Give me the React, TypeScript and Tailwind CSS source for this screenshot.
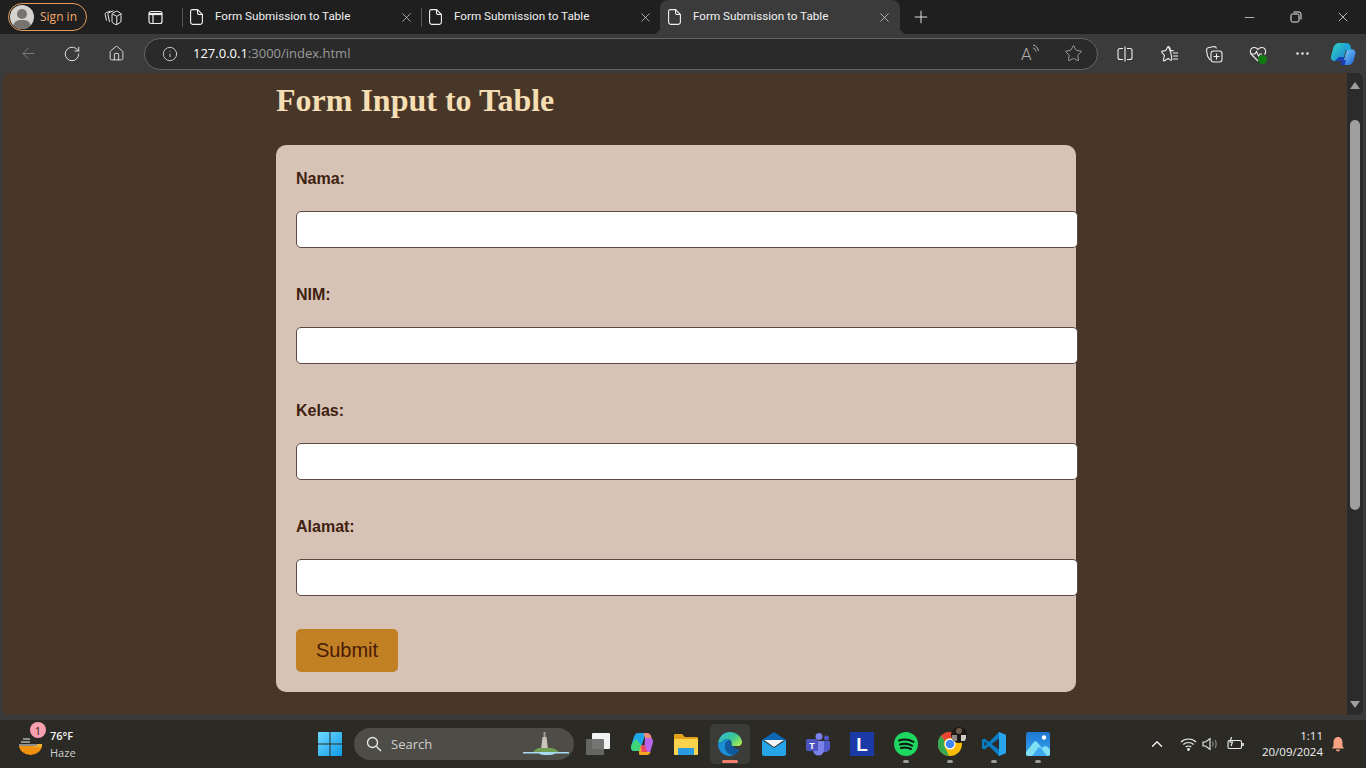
import React from "react";
import { ArrowLeft, ChevronUp, Ellipsis, Home, Info, Minus, Plus, RotateCw, Star, X } from "lucide-react";

const uiFont = "font-['Open_Sans','Noto_Sans',sans-serif]";

const PageIcon = () => (
  <svg width="13" height="16" viewBox="0 0 13 16" fill="none" stroke="#f2f2f2" strokeWidth="1.100" className="shrink-0">
    <path d="M2.500.6h5L12.400 5.500V13a2.400 2.400 0 0 1-2.400 2.400H3A2.400 2.400 0 0 1 .6 13V2.500A1.900 1.900 0 0 1 2.500.6z" />
    <path d="M7.500.6v3.200a1.700 1.700 0 0 0 1.700 1.700h3.200" />
  </svg>
);

const Tab = ({ active }: { active?: boolean }) => (
  <div className={`relative flex h-[34px] items-center ${active ? "w-[240px] rounded-t-lg bg-[#3b3b3b] pl-2" : "w-[238px] pl-[7px]"}`}>
    <PageIcon />
    <span className="ml-3 font-['Roboto',sans-serif] text-[11.700px] text-[#f0f0f0]">Form Submission to Table</span>
    <X size={15} strokeWidth={1.100} className={`absolute top-[10px] text-[#e4e4e4] ${active ? "right-[8px]" : "right-[7px]"}`} />
    {active && (
      <>
        <span className="absolute bottom-0 left-[-7px] h-[7px] w-[7px] bg-[radial-gradient(circle_at_0_0,#1f1f1f_7px,#3b3b3b_7px)]" />
        <span className="absolute bottom-0 right-[-7px] h-[7px] w-[7px] bg-[radial-gradient(circle_at_100%_0,#1f1f1f_7px,#3b3b3b_7px)]" />
      </>
    )}
  </div>
);

const TitleBar = () => (
  <div className="flex h-[34px] items-center bg-[#1f1f1f]">
    <div className="ml-2 flex h-[28px] w-[79px] items-center rounded-full border border-[#e69b5e]">
      <span className="relative ml-px h-6 w-6 overflow-hidden rounded-full bg-[#d5d3d0]">
        <span className="absolute left-[7px] top-1 h-[10px] w-[10px] rounded-full bg-[#77736f]" />
        <span className="absolute left-[3px] top-[15px] h-[14px] w-[18px] rounded-full bg-[#77736f]" />
      </span>
      <span className={`ml-[6px] text-[12px] text-[#efa769] ${uiFont}`}>Sign in</span>
    </div>
    <svg width="18" height="18" viewBox="0 0 18 18" fill="none" stroke="#e8e8e8" strokeWidth="1" className="ml-[17px]">
      <path d="M2.500 12.500 1.200 6.500c-.2-.8.2-1.500 1-1.800L6.500 3" />
      <path d="M5.500 14 4 6.500c-.2-.9.200-1.500 1-1.800l4.500-2" />
      <path d="M8 6.500c0-.8.400-1.300 1-1.600l3-1.500c.6-.3 1.200-.3 1.700 0l2.300 1.400c.6.400 1 1 1 1.700v6.500c0 .8-.4 1.300-1 1.600l-3 1.800c-.6.300-1.200.3-1.800 0L9 15c-.6-.4-1-1-1-1.700z" />
      <path d="m8.300 6 4.500 2.300L17.500 5.500M12.800 8.300v8.400" />
    </svg>
    <svg width="15" height="15" viewBox="0 0 15 15" fill="none" stroke="#f0f0f0" strokeWidth="1.200" className="ml-[26px]">
      <rect x="1" y="1.500" width="13" height="12" rx="2" />
      <path d="M1 4h13" strokeWidth="2.200" />
      <path d="M5 4v9.500" />
    </svg>
    <div className="ml-[19px] h-[19px] w-px bg-[#555]" />
    <Tab />
    <div className="h-[19px] w-px bg-[#555]" />
    <Tab />
    <Tab active />
    <Plus size={20} strokeWidth={1.100} className="ml-[11px] text-[#f0f0f0]" />
    <div className="ml-auto flex items-center">
      <Minus size={15} strokeWidth={1.100} className="text-[#eee]" />
      <svg width="12" height="12" viewBox="0 0 12 12" fill="none" stroke="#eee" strokeWidth="1" className="ml-[33px]">
        <rect x="1" y="3" width="8" height="8" rx="1.500" />
        <path d="M3.500 1h5.500a2 2 0 0 1 2 2v5.500" />
      </svg>
      <X size={16} strokeWidth={1.100} className="ml-[33px] mr-[15px] text-[#eee]" />
    </div>
  </div>
);

const Copilot = ({ size = 26 }: { size?: number }) => (
  <svg width={size} height={size} viewBox="0 0 26 26">
    <defs>
      <linearGradient id="cpa" x1="0" y1="0" x2="1" y2="1">
        <stop offset="0" stopColor="#2fd6c0" />
        <stop offset="1" stopColor="#1a7fd6" />
      </linearGradient>
      <linearGradient id="cpb" x1="0" y1="0" x2="1" y2="1">
        <stop offset="0" stopColor="#7ad0f7" />
        <stop offset="1" stopColor="#1d5fd9" />
      </linearGradient>
    </defs>
    <path d="M9 2h6.500c1.500 0 2 1 1.600 2.300L13 20H5c-3 0-4.500-2-4-4.500L3 8c.8-3.500 3-6 6-6z" fill="url(#cpa)" />
    <path d="M13 24h5c3 0 5-2 5.800-5l1.600-6c.6-2.500-.9-4.500-3.400-4.500H17l-4 13.500c-.2 1 0 2 0 2z" fill="url(#cpb)" />
    <path d="M14 2h2.500c2 0 3.500 1.500 4 3.300L21.500 9H16z" fill="#1ea6d8" />
    <path d="M5 20h8l1.500-4H9z" fill="#1c3fb8" />
    <path d="M11 24h4l1-5h-4z" fill="#1c3fb8" />
  </svg>
);

const ToolBar = () => (
  <div className="flex h-[39px] items-center bg-[#3b3b3b]">
    <ArrowLeft size={19} strokeWidth={1} className="ml-[19px] text-[#8b8b8b]" />
    <RotateCw size={18} strokeWidth={1.200} className="ml-[25px] text-[#efefef]" />
    <Home size={17} strokeWidth={1.200} className="ml-[27px] text-[#efefef]" />
    <div className="ml-[19px] flex h-[32px] w-[954px] items-center rounded-full border border-[#636363] bg-[#2a2a2a]">
      <Info size={16} strokeWidth={1.200} className="ml-[17px] text-[#e8e8e8]" />
      <span className={`ml-[15px] text-[13px] text-white ${uiFont}`}>
        127.0.0.1<span className="text-[#9a9a9a]">:3000/index.html</span>
      </span>
      <div className="ml-auto flex items-center">
        <span className="relative mr-[26px] h-4 w-[17px]">
          <span className="absolute left-0 top-[-4px] font-['Roboto',sans-serif] text-[17px] font-light leading-[24px] text-[#b0b0b0]">A</span>
          <svg width="8" height="9" viewBox="0 0 8 9" fill="none" stroke="#b0b0b0" strokeWidth="1" className="absolute right-[-2px] top-[-2px]">
            <path d="M1 1c3 .5 5 3 5.500 6M1 4c1.500.3 2.500 1.500 3 3.500" />
          </svg>
        </span>
        <Star size={19} strokeWidth={1.100} className="mr-[14px] text-[#a8a8a8]" />
      </div>
    </div>
    <svg width="16" height="16" viewBox="0 0 16 16" fill="none" stroke="#efefef" strokeWidth="1.100" className="ml-[19px]">
      <path d="M6 2.500H3a2 2 0 0 0-2 2v7a2 2 0 0 0 2 2h3M10 2.500h3a2 2 0 0 1 2 2v7a2 2 0 0 1-2 2h-3M8 .5v15" />
    </svg>
    <svg width="18" height="18" viewBox="0 0 18 18" fill="none" stroke="#efefef" strokeWidth="1.100" className="ml-[28px]">
      <path d="M7.500 1.500c.4 0 .7.300.9.700l1.300 3.200 3 .3M10 8.500l.8 5.800c.1.800-.6 1.200-1.200.8L7.200 13.500l-3.700 2.300c-.6.300-1.200-.1-1.100-.8l1-4.500L1 7.500c-.5-.5-.3-1.300.4-1.400l3.500-.5 1.600-3.400c.2-.4.600-.7 1-.7z" />
      <path d="M12 8h5M12 11h5M12 14h5" />
    </svg>
    <svg width="18" height="18" viewBox="0 0 18 18" fill="none" stroke="#efefef" strokeWidth="1.100" className="ml-[26px]">
      <path d="M5 15 2.500 11 1.500 5c0-1 .5-2 1.500-2.300L9 1.500c1.500 0 2.300.5 2.500 2" />
      <rect x="6" y="6" width="11" height="11" rx="2.500" />
      <path d="M11.500 8.500v6M8.500 11.500h6" />
    </svg>
    <span className="relative ml-[26px] h-[18px] w-[18px]">
      <svg width="18" height="18" viewBox="0 0 18 18" fill="none" stroke="#efefef" strokeWidth="1.100">
        <path d="M9 16 2.500 9.500C.5 7.500 1 3 4.500 2.500 6.500 2.200 8 3 9 4.500c1-1.500 2.500-2.300 4.500-2 3.500.5 4 5 2 7" />
        <path d="M1.500 9H6l1.500-2.500L9.500 11l1.500-2h2" />
      </svg>
      <span className="absolute bottom-[-1px] right-0 h-[9px] w-[9px] rounded-full bg-[#107c10]" />
    </span>
    <Ellipsis size={17} strokeWidth={1.600} className="ml-[27px] text-[#efefef]" />
    <span className="ml-[19px]">
      <Copilot />
    </span>
  </div>
);

const Field = ({ label }: { label: string }) => (
  <div className="pb-[33px]">
    <label className="mb-[23px] block pt-[5px] text-[16px] font-bold leading-[18px] text-[#3e2110]">{label}</label>
    <input type="text" className="block h-[37px] w-[782px] rounded-[5px] border border-[#5b4a43] bg-white" />
  </div>
);

const Page = () => (
  <div className="flex-1 overflow-hidden rounded-tl-md bg-[#483629] font-['Liberation_Sans',Arial,sans-serif]">
    <div className="ml-[273px] w-[800px] pt-[9px]">
      <h1 className="mb-[27px] font-['Liberation_Serif',serif] text-[32px] font-bold leading-[36px] text-[#f5deb3]">
        Form Input to Table
      </h1>
      <form className="rounded-[10px] bg-[#d7c3b5] p-5">
        {["Nama:", "NIM:", "Kelas:", "Alamat:"].map((label) => (
          <Field key={label} label={label} />
        ))}
        <button type="button" className="block h-[43px] w-[102px] rounded-[5px] bg-[#c18023] pb-[2px] text-[20px] text-[#4a1a08]">
          Submit
        </button>
      </form>
    </div>
  </div>
);

const Scrollbar = () => (
  <div className="flex w-[16px] flex-col items-center rounded-r-md bg-[#2b2b2b]">
    <span className="mt-[9px] h-0 w-0 border-x-[5px] border-b-[7px] border-x-transparent border-b-[#a0a0a0]" />
    <span className="mt-[31px] h-[390px] w-[10px] rounded-full bg-[#9f9f9f]" />
    <span className="mb-[7px] mt-auto h-0 w-0 border-x-[5px] border-t-[7px] border-x-transparent border-t-[#a0a0a0]" />
  </div>
);

const WinLogo = () => (
  <svg width="24" height="24" viewBox="0 0 24 24">
    <defs>
      <linearGradient id="win" x1="0" y1="0" x2="1" y2="1">
        <stop offset="0" stopColor="#6fd8ff" />
        <stop offset="1" stopColor="#0f9be8" />
      </linearGradient>
    </defs>
    <path d="M1 0h10.500v11.500H0V1a1 1 0 0 1 1-1zM12.500 0H23a1 1 0 0 1 1 1v10.500H12.500zM0 12.500h11.500V24H1a1 1 0 0 1-1-1zM12.500 12.500H24V23a1 1 0 0 1-1 1H12.500z" fill="url(#win)" />
  </svg>
);

const TaskView = () => (
  <svg width="26" height="24" viewBox="0 0 26 24">
    <rect x="7" y="1" width="18" height="16" rx="1" fill="#f2f2f2" />
    <rect x="1" y="7" width="18" height="16" rx="1" fill="#6a6a68" fillOpacity="0.920" />
  </svg>
);

const CopilotColor = () => (
  <svg width="24" height="24" viewBox="0 0 24 24">
    <path d="M8 1h6c1 0 1.300.8 1 1.700L10 19H4.500C2 19 .5 17 1 14.500L3.500 6C4.300 3 6 1 8 1z" fill="#1fa6e8" />
    <path d="M1 14.500C.5 17 2 19 4.500 19H10l1.500-5-5-7C4.500 8 3 10 2.500 11z" fill="#3fd47a" />
    <path d="M14 1h3c2 0 3.500 1.300 4 3l1 3h-7l-1-5z" fill="#f08a7a" />
    <path d="M15 6h4.500C22 6 23.500 8 23 10.500L20.500 19c-.4 1.500-1.500 2.500-3 3l-3-8z" fill="#b865ea" />
    <path d="M10 23h7c1.500 0 3-1 3.500-3H13.500L11 13l-2 7c-.2 1.500.2 3 1 3z" fill="#f5a623" />
    <path d="M11 13h3.500l3 7h-6z" fill="#e8475f" />
  </svg>
);

const Explorer = () => (
  <svg width="24" height="22" viewBox="0 0 24 22">
    <path d="M0 2a1 1 0 0 1 1-1h7l3 3h12a1 1 0 0 1 1 1v4H0z" fill="#e3a21a" />
    <path d="M0 6h24v15a1 1 0 0 1-1 1H1a1 1 0 0 1-1-1z" fill="#fcd34d" />
    <rect x="4" y="15" width="16" height="7" fill="#2b9be0" />
  </svg>
);

const Edge = () => (
  <svg width="24" height="24" viewBox="0 0 24 24">
    <defs>
      <linearGradient id="edgeG" x1="0" y1="0" x2="1" y2="0.700">
        <stop offset="0" stopColor="#2fb6e8" />
        <stop offset="0.600" stopColor="#38c88f" />
        <stop offset="1" stopColor="#a2e85a" />
      </linearGradient>
    </defs>
    <path d="M12 0c6 0 11 4 12 9.500.3 2-.7 4-3 4.500h-7c-1 0 0-3-1-5-1.500-2.500-6-3-8 0C3 11 1 11 .3 10 1.500 4 6 0 12 0z" fill="url(#edgeG)" />
    <path d="M.3 10c1 1 3 1 4.700-1 2-3 6.500-2.500 8 0-3-1.500-6 1-6 5 0 5 4 9 9 9-1.300.6-2.700 1-4 1C5 24 0 19 0 12c0-.7.100-1.400.3-2z" fill="#1b8fd6" />
    <path d="M7 14c0-4 3-6.500 6-5 1 2 0 5 1 5h6c-.5 0-3 .5-4.500.5-1 0 1 3 6 2.500-1.300 3-3 5-5.500 6-5 0-9-4-9-9z" fill="#0f5a9e" />
  </svg>
);

const Mail = () => (
  <svg width="24" height="24" viewBox="0 0 24 24">
    <path d="M0 8 12 0l12 8v1H0z" fill="#0c68b3" />
    <path d="M2 8h20l-10 7z" fill="#f2f5f8" />
    <path d="M0 8v14a2 2 0 0 0 2 2h20a2 2 0 0 0 2-2V8l-12 8z" fill="#25a4e8" />
  </svg>
);

const Teams = () => (
  <svg width="24" height="24" viewBox="0 0 24 24">
    <circle cx="13" cy="4.500" r="3.500" fill="#7b83eb" />
    <circle cx="20.500" cy="6" r="2.500" fill="#5059c9" />
    <path d="M16 9h7a1 1 0 0 1 1 1v6a5 5 0 0 1-8 3z" fill="#5059c9" />
    <path d="M7 9h11v9a5.500 5.500 0 0 1-11 0z" fill="#7b83eb" />
    <rect x="0" y="7" width="12" height="12" rx="1.500" fill="#4b53bc" />
    <text x="6" y="16.500" textAnchor="middle" fontSize="9" fontWeight="700" fill="#fff" fontFamily="Liberation Sans">
      T
    </text>
  </svg>
);

const Spotify = () => (
  <svg width="24" height="24" viewBox="0 0 24 24">
    <circle cx="12" cy="12" r="12" fill="#1ed760" />
    <path d="M5 8.500c5-1.500 10-1 14.500 1.300M6 12.500c4-1.200 8.500-.8 12 1.200M7 16c3.500-.8 7-.5 10 1" fill="none" stroke="#111" strokeWidth="2" strokeLinecap="round" />
  </svg>
);

const Chrome = () => (
  <span className="relative block h-6 w-6">
    <svg width="24" height="24" viewBox="0 0 24 24">
      <circle cx="12" cy="12" r="12" fill="#fbbc04" />
      <path d="M12 0a12 12 0 0 1 10.400 6H12a6 6 0 0 0-5.200 3L3 3.800A12 12 0 0 1 12 0z" fill="#ea4335" />
      <path d="M3 3.800 6.800 9a6 6 0 0 0 0 6l4.200 8.900A12 12 0 0 1 3 3.800z" fill="#34a853" />
      <circle cx="12" cy="12" r="5.500" fill="#fff" />
      <circle cx="12" cy="12" r="4.300" fill="#4285f4" />
    </svg>
    <span className="absolute right-[-5px] top-[-5px] h-[16px] w-[16px] overflow-hidden rounded-full bg-[#1d1a18]">
      <span className="absolute left-[5px] top-[1px] h-[6px] w-[6px] rounded-full bg-[#6d5a4b]" />
      <span className="absolute bottom-[2px] left-[1px] h-[6px] w-[5px] bg-[#8f8a83]" />
      <span className="absolute bottom-[2px] right-[1px] h-[6px] w-[5px] bg-[#d2cdc4]" />
    </span>
  </span>
);

const VsCode = () => (
  <svg width="24" height="24" viewBox="0 0 24 24">
    <path d="M17 0 7 10 2.500 6.500 0 7.700v8.600l2.500 1.200L7 14l10 10 7-3V3z" fill="#0a7cc4" />
    <path d="M17 0l7 3v18l-7 3z" fill="#2ba4ee" />
    <path d="M17 6.500 9.500 12l7.500 5.500z" fill="#2c2c2c" />
    <path d="M2.500 9.500 5 12l-2.500 2.500z" fill="#2c2c2c" />
  </svg>
);

const Photos = () => (
  <svg width="24" height="24" viewBox="0 0 24 24">
    <defs>
      <linearGradient id="ph" x1="0" y1="0" x2="0" y2="1">
        <stop offset="0" stopColor="#1d76d2" />
        <stop offset="1" stopColor="#3aa8ee" />
      </linearGradient>
    </defs>
    <rect width="24" height="24" rx="2" fill="url(#ph)" />
    <circle cx="18" cy="5.500" r="2.200" fill="#fff" />
    <path d="M0 20 8 10c1-1 2-1 3 0l5 6 2-1.500c1-.7 2-.7 3 0l3 3V22a2 2 0 0 1-2 2H2a2 2 0 0 1-2-2z" fill="#7fe0f5" />
    <path d="M6 24 12 16c1-1 2-1 3 0l6 8z" fill="#3fa7ee" />
  </svg>
);

const LApp = () => (
  <div className="flex h-6 w-6 items-center justify-center bg-[#1b3aa8] font-['Liberation_Sans',sans-serif] text-[19px] font-bold leading-none text-white">
    L
  </div>
);

const TaskIcon = ({ children, dot, active }: { children: React.ReactNode; dot?: boolean; active?: boolean }) => (
  <div className="relative flex h-[48px] w-[44px] items-center justify-center">
    {active && <span className="absolute left-[2px] top-[4px] h-[40px] w-[40px] rounded-[5px] bg-[#3b3b37]" />}
    <span className="relative">{children}</span>
    {dot && <span className="absolute bottom-[5px] left-[19px] h-[3px] w-[6px] rounded-full bg-[#9a9a9a]" />}
    {active && <span className="absolute bottom-[5px] left-[14px] h-[3px] w-[16px] rounded-full bg-[#f0806a]" />}
  </div>
);

const Taskbar = () => (
  <div className={`flex h-[48px] items-center bg-[#2b2a25] text-white ${uiFont}`}>
    <div className="flex w-[318px] items-center pl-[18px]">
      <span className="relative h-6 w-6">
        <svg width="24" height="24" viewBox="0 0 24 24">
          <path d="M1 13h23a11.500 10 0 0 1-23 0z" fill="#f0920f" />
          <path d="M16 12h8v3h-8z" fill="#f0b030" />
          <path d="M5 7h7M3 10h9M1 13h18" stroke="#8e8e8e" strokeWidth="2" />
        </svg>
        <span className="absolute left-3 top-[-10px] flex h-4 w-4 items-center justify-center rounded-full bg-[#f9a0b0] text-[11px] leading-none text-[#2b1a1a]">
          1
        </span>
      </span>
      <div className="ml-2 flex flex-col">
        <span className="text-[11px] font-semibold leading-[16px] text-[#f4f4f4]">76°F</span>
        <span className="text-[11px] leading-[17px] text-[#cfcfcf]">Haze</span>
      </div>
    </div>
    <WinLogo />
    <div className="relative ml-3 flex h-[32px] w-[220px] items-center overflow-hidden rounded-full bg-[#4d4c47]">
      <svg width="16" height="16" viewBox="0 0 16 16" fill="none" stroke="#e6e6e6" strokeWidth="1.400" className="ml-[12px]">
        <circle cx="6.500" cy="6.500" r="5" />
        <path d="m10.500 10.500 4.500 4.500" />
      </svg>
      <span className="ml-[9px] pt-px text-[13px] text-[#cfcfcf]">Search</span>
      <svg width="46" height="26" viewBox="0 0 46 26" className="absolute right-[5px] top-[3px]">
        <path d="M19.500 6h4l1.500 12h-7z" fill="#c9c3ba" />
        <path d="M20.500 1h2v5h-2z" fill="#a09a92" />
        <path d="M10 21c3-4 7-5 10-4h7c4 0 7 2 9 4z" fill="#6f9e52" />
        <path d="M0 21h46v1.500H32c-2 2-14 2-16 0H0z" fill="#a8dcf0" />
      </svg>
    </div>
    <div className="ml-[2px] flex">
      <TaskIcon>
        <TaskView />
      </TaskIcon>
      <TaskIcon>
        <CopilotColor />
      </TaskIcon>
      <TaskIcon>
        <Explorer />
      </TaskIcon>
      <TaskIcon active>
        <Edge />
      </TaskIcon>
      <TaskIcon>
        <Mail />
      </TaskIcon>
      <TaskIcon>
        <Teams />
      </TaskIcon>
      <TaskIcon>
        <LApp />
      </TaskIcon>
      <TaskIcon dot>
        <Spotify />
      </TaskIcon>
      <TaskIcon dot>
        <Chrome />
      </TaskIcon>
      <TaskIcon dot>
        <VsCode />
      </TaskIcon>
      <TaskIcon dot>
        <Photos />
      </TaskIcon>
    </div>
    <div className="ml-auto flex items-center">
      <ChevronUp size={18} strokeWidth={1.800} className="text-[#f0f0f0]" />
      <svg width="17" height="14" viewBox="0 0 17 14" fill="none" stroke="#ededed" strokeWidth="1.200" className="ml-[14px]">
        <path d="M1 5c4-4 11-4 15 0M3.300 7.500c3-2.700 7.400-2.700 10.400 0M5.700 10c1.500-1.300 4.100-1.300 5.600 0" />
        <circle cx="8.500" cy="12.500" r=".8" fill="#ededed" />
      </svg>
      <svg width="17" height="14" viewBox="0 0 17 14" fill="none" stroke="#ededed" strokeWidth="1.100" className="ml-[5px]">
        <path d="M1 5v4h2.500L8 12.500v-11L3.500 5z" />
        <path d="M10.500 4.500c1 1.500 1 3.500 0 5M13 3c1.500 2.500 1.500 5.500 0 8" stroke="#8f8f8f" />
      </svg>
      <svg width="18" height="14" viewBox="0 0 18 14" fill="none" stroke="#ededed" strokeWidth="1.100" className="ml-[8px]">
        <rect x="1" y="3.500" width="13.500" height="8" rx="1.500" />
        <path d="M16 6v3" strokeWidth="1.600" />
        <path d="M4.500 0 3 5h2.500L4 9" strokeWidth="1.200" />
      </svg>
      <div className="ml-[17px] flex flex-col items-end">
        <span className="text-[11.500px] font-medium leading-[16px] text-[#f0f0f0]">1:11</span>
        <span className="text-[11.500px] leading-[16px] text-[#f0f0f0]">20/09/2024</span>
      </div>
      <svg width="14" height="16" viewBox="0 0 14 16" className="ml-2 mr-[21px]">
        <path d="M7 1c3 0 4.500 2.500 4.500 5.500V10l1.500 2.500H1L2.500 10V6.500C2.500 3.500 4 1 7 1z" fill="#f9a183" />
        <path d="M5 13.500h4a2 2 0 0 1-4 0z" fill="#f9a183" />
      </svg>
    </div>
  </div>
);

export default function App() {
  return (
    <div className={`flex h-[768px] w-[1366px] flex-col overflow-hidden bg-[#333331] ${uiFont}`}>
      <TitleBar />
      <ToolBar />
      <div className="flex h-[642px] bg-[#3b3b3b] px-[3px]">
        <Page />
        <Scrollbar />
      </div>
      <div className="h-[5px] bg-[#3b3b3b]" />
      <Taskbar />
    </div>
  );
}
